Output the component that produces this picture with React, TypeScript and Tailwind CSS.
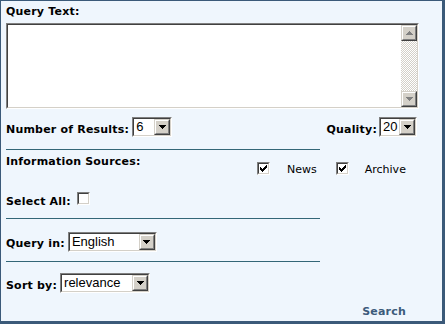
const CHECK = [
  '......#',
  '.....##',
  '#...###',
  '##.###.',
  '#####..',
  '.###...',
  '..#....',
];

function CheckMark() {
  return (
    <svg width="7" height="7" shapeRendering="crispEdges">
      {CHECK.flatMap((row, y) =>
        row.split('').map((c, x) => (c === '#' ? <rect key={`${x}-${y}`} x={x} y={y} width="1" height="1" fill="#000" /> : null)),
      )}
    </svg>
  );
}

function Arrow({ up = false, color = '#000' }: { up?: boolean; color?: string }) {
  const rows = up ? [1, 3, 5, 7] : [7, 5, 3, 1];
  return (
    <svg width="7" height="4" shapeRendering="crispEdges">
      {rows.map((w, y) => (
        <rect key={y} x={(7 - w) / 2} y={y} width={w} height="1" fill={color} />
      ))}
    </svg>
  );
}

function Button3d({ children }: { children: React.ReactNode }) {
  return (
    <div className="w-[16px] h-[16px] shrink-0 bg-[#d4d0c8] border border-t-[#d4d0c8] border-l-[#d4d0c8] border-r-[#404040] border-b-[#404040]">
      <div className="h-full border border-t-white border-l-white border-r-[#808080] border-b-[#808080] flex items-center justify-center">
        {children}
      </div>
    </div>
  );
}

function Inset({ className, children }: { className?: string; children?: React.ReactNode }) {
  return (
    <div className={`border border-t-[#808080] border-l-[#808080] border-r-white border-b-white ${className ?? ''}`}>
      <div className="h-full border border-t-[#404040] border-l-[#404040] border-r-[#d4d0c8] border-b-[#d4d0c8] bg-white flex">
        {children}
      </div>
    </div>
  );
}

function Select({ value, width }: { value: string; width: string }) {
  return (
    <Inset className={`h-[20px] ${width} shrink-0`}>
      <div className="flex-1 pl-[2px] text-[13px] leading-[16px] font-['Liberation_Sans',Arial,sans-serif] text-black">
        {value}
      </div>
      <Button3d>
        <Arrow />
      </Button3d>
    </Inset>
  );
}

function Checkbox({ checked }: { checked?: boolean }) {
  return (
    <div className="w-[13px] h-[13px] shrink-0 border border-t-[#808080] border-l-[#808080] border-r-white border-b-white">
      <div className="h-full border border-t-[#404040] border-l-[#404040] border-r-[#d4d0c8] border-b-[#d4d0c8] bg-white flex items-center justify-center">
        {checked && <CheckMark />}
      </div>
    </div>
  );
}

function Rule() {
  return <div className="w-[314px] h-px bg-[#336677]" />;
}

const label = "font-['DejaVu_Sans',Verdana,sans-serif] text-[11px] tracking-[0.2px] leading-[13px] font-bold whitespace-nowrap";

export default function App() {
  return (
    <div className="w-[445px] h-[324px] bg-[#eff6fd] border-t border-l border-r-[3px] border-b-[3px] border-[#3b5a79] overflow-hidden text-black">
      <div className="w-[418px] pl-[5px] flex flex-col">
        <div className={`${label} mt-[4px]`}>Query Text:</div>

        <Inset className="mt-[5px] h-[86px] w-[413px]">
          <div className="flex-1" />
          <div className="w-[16px] flex flex-col">
            <Button3d>
              <Arrow up color="#808080" />
            </Button3d>
            <div className="flex-1 bg-[repeating-conic-gradient(#d4d0c8_0_25%,#ffffff_0_50%)] bg-[length:2px_2px]" />
            <Button3d>
              <Arrow color="#808080" />
            </Button3d>
          </div>
        </Inset>

        <div className="mt-[8px] flex items-start h-[20px]">
          <span className={`${label} mt-[6px]`}>Number of Results:</span>
          <div className="ml-[3px]">
            <Select value="6" width="w-[40px]" />
          </div>
          <span className={`${label} mt-[6px] ml-auto`}>Quality:</span>
          <div className="ml-[2px] mr-[2px]">
            <Select value="20" width="w-[38px]" />
          </div>
        </div>

        <div className="mt-[12px]">
          <Rule />
        </div>

        <div className="mt-[5px] flex items-start h-[20px]">
          <span className={`${label} w-[251px]`}>Information Sources:</span>
          <div className="mt-[7px] flex items-end">
            <Checkbox checked />
            <span className="ml-[17px] font-['DejaVu_Sans',Verdana,sans-serif] text-[11px] leading-[11px]">News</span>
            <div className="ml-[19px]">
              <Checkbox checked />
            </div>
            <span className="ml-[16px] font-['DejaVu_Sans',Verdana,sans-serif] text-[11px] leading-[11px]">Archive</span>
          </div>
        </div>

        <div className="mt-[17px] flex items-start h-[13px]">
          <span className={`${label} mt-[3px]`}>Select All:</span>
          <div className="ml-[6px]">
            <Checkbox />
          </div>
        </div>

        <div className="mt-[13px]">
          <Rule />
        </div>

        <div className="mt-[13px] flex items-start h-[20px]">
          <span className={`${label} mt-[5px]`}>Query in:</span>
          <div className="ml-[3px]">
            <Select value="English" width="w-[89px]" />
          </div>
        </div>

        <div className="mt-[9px]">
          <Rule />
        </div>

        <div className="mt-[11px] flex items-start h-[20px]">
          <span className={`${label} mt-[6px]`}>Sort by:</span>
          <div className="ml-[3px]">
            <Select value="relevance" width="w-[90px]" />
          </div>
        </div>

        <div className="mt-[12px] flex justify-end pr-[13px]">
          <span className={`${label} text-[#3c5b7b]`}>Search</span>
        </div>
      </div>
    </div>
  );
}
